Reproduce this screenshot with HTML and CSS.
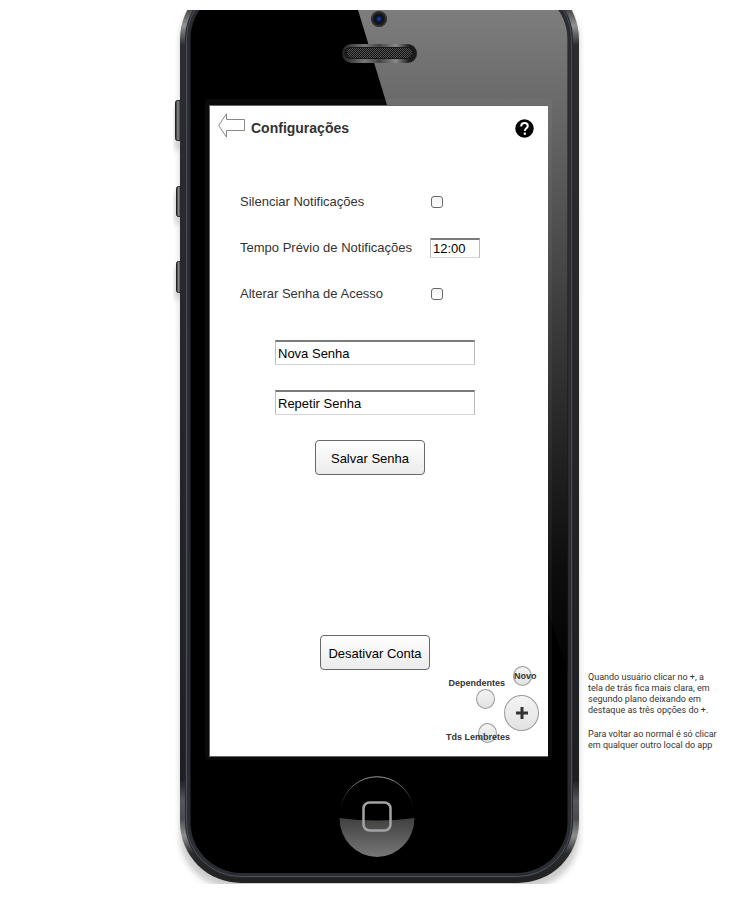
FILE: index.html
```html
<!DOCTYPE html>
<html lang="pt">
<head>
<meta charset="utf-8">
<meta name="viewport" content="width=device-width, initial-scale=1">
<title>Configurações</title>
<link rel="stylesheet" href="styles.css">
</head>
<body>
<main class="board">
  <section class="phone">
    <svg class="phone-art" viewBox="170 10 414 874" preserveAspectRatio="none" aria-hidden="true">
      <defs>
        <linearGradient id="metal" gradientUnits="userSpaceOnUse" x1="0" y1="10" x2="0" y2="884">
          <stop offset="0" stop-color="#4a4a4a"/>
          <stop offset=".018" stop-color="#929292"/>
          <stop offset=".04" stop-color="#2b2d2f"/>
          <stop offset=".88" stop-color="#1d1f21"/>
          <stop offset=".905" stop-color="#55575a"/>
          <stop offset=".925" stop-color="#4a4c4f"/>
          <stop offset=".945" stop-color="#8e8e8e"/>
          <stop offset=".965" stop-color="#2a2a2a"/>
          <stop offset="1" stop-color="#202020"/>
        </linearGradient>
        <linearGradient id="gloss" gradientUnits="userSpaceOnUse" x1="0" y1="10" x2="0" y2="690">
          <stop offset="0" stop-color="#7d7d7d"/>
          <stop offset=".14" stop-color="#696969"/>
          <stop offset=".45" stop-color="#3c3c3c"/>
          <stop offset=".82" stop-color="#0d0d0d"/>
          <stop offset="1" stop-color="#010101"/>
        </linearGradient>
        <linearGradient id="speaker" x1="0" y1="0" x2="1" y2="0">
          <stop offset="0" stop-color="#222"/>
          <stop offset=".3" stop-color="#777"/>
          <stop offset=".5" stop-color="#444"/>
          <stop offset=".72" stop-color="#8a8a8a"/>
          <stop offset=".9" stop-color="#1c1c1c"/>
        </linearGradient>
        <linearGradient id="home" x1="0" y1="0" x2="0" y2="1">
          <stop offset="0" stop-color="#404040"/>
          <stop offset="1" stop-color="#777"/>
        </linearGradient>
        <linearGradient id="arc" x1="0" y1="0" x2="0" y2="1">
          <stop offset="0" stop-color="#999"/>
          <stop offset=".7" stop-color="#222"/>
          <stop offset="1" stop-color="#000"/>
        </linearGradient>
        <linearGradient id="key" x1="0" y1="0" x2="1" y2="0">
          <stop offset="0" stop-color="#222"/>
          <stop offset=".35" stop-color="#8a8a8a"/>
          <stop offset=".7" stop-color="#333"/>
        </linearGradient>
        <radialGradient id="lens">
          <stop offset="0" stop-color="#1c4fae"/>
          <stop offset=".3" stop-color="#091c52"/>
          <stop offset=".55" stop-color="#111"/>
          <stop offset=".9" stop-color="#333"/>
          <stop offset="1" stop-color="#222"/>
        </radialGradient>
        <pattern id="mesh" width="2" height="2" patternUnits="userSpaceOnUse">
          <rect width="2" height="2" fill="#111"/>
          <rect width="1" height="1" fill="#555"/>
          <rect x="1" y="1" width="1" height="1" fill="#555"/>
        </pattern>
        <filter id="soft" x="-10%" y="-10%" width="120%" height="120%"><feGaussianBlur stdDeviation="3"/></filter>
        <clipPath id="face"><rect x="190.500" y="-12" width="377" height="885" rx="51"/></clipPath>
      </defs>
      <rect x="180" y="-10" width="399" height="898" rx="52" fill="#000" opacity=".2" filter="url(#soft)"/>
      <g opacity=".15" filter="url(#soft)">
        <rect x="174" y="106" width="8" height="44"/>
        <rect x="174" y="192" width="8" height="32"/>
        <rect x="174" y="267" width="8" height="32"/>
      </g>
      <g fill="url(#key)" stroke="#222">
        <rect x="175.500" y="100.500" width="7" height="40" rx="2"/>
        <rect x="176.500" y="186.500" width="6" height="30" rx="2"/>
        <rect x="176.500" y="261.500" width="6" height="31" rx="2"/>
      </g>
      <rect x="180" y="-22" width="399" height="905" rx="61" fill="url(#metal)"/>
      <rect x="185" y="-17" width="388" height="895" rx="56" fill="#26282b"/>
      <rect x="186.500" y="-15.500" width="385" height="892" rx="54" fill="#2a2c2f" stroke="#4a5160"/>
      <g clip-path="url(#face)">
        <rect x="190" y="10" width="378" height="864" fill="#000"/>
        <path d="M358 10H570V680L387 105Z" fill="url(#gloss)"/>
      </g>
      <rect x="205" y="99" width="347" height="661" rx="3" fill="#fff" opacity=".04"/>
      <rect x="209" y="105" width="339" height="652" fill="#666"/>
      <circle cx="379" cy="19" r="8" fill="url(#lens)"/>
      <rect x="342" y="44" width="75" height="19" rx="9.500" fill="url(#speaker)"/>
      <rect x="344" y="47" width="71" height="12" rx="6" fill="#1a1a1a"/>
      <rect x="347" y="48" width="65" height="10" rx="5" fill="url(#mesh)"/>
      <path d="M341 806A37 38 0 0 1 413 806" fill="none" stroke="url(#arc)"/>
      <path d="M339.500 818Q377 823 414.500 818A37.500 39 0 0 1 339.500 818Z" fill="url(#home)"/>
      <rect x="363.500" y="802.500" width="27" height="28" rx="6" fill="none" stroke="#a3a3a7" stroke-width="2.500"/>
    </svg>

    <div class="screen">
      <header class="top">
        <a class="back" href="#voltar" aria-label="Voltar">
          <svg width="27" height="25" viewBox="0 0 27 25" aria-hidden="true"><path d="M.7 12.500L8.500.8V6.500H26.500V17.500H8.500V24.200Z" fill="#fff" stroke="#888"/></svg>
        </a>
        <h1>Configurações</h1>
        <a class="help" href="#ajuda" aria-label="Ajuda">
          <svg width="19" height="19" viewBox="0 0 19 19" aria-hidden="true"><circle cx="9.500" cy="9.500" r="9.200"/><path d="M6.200 7.400C6.200 5.200 7.600 4.100 9.500 4.100S12.800 5.300 12.800 7.100C12.800 9.200 9.800 9.300 9.800 12" fill="none" stroke="#fff" stroke-width="2"/><rect x="8.700" y="13.600" width="2.200" height="2.200" fill="#fff"/></svg>
        </a>
      </header>

      <form class="settings">
        <label for="mute">Silenciar Notificações</label>
        <input id="mute" type="checkbox">
        <label for="lead">Tempo Prévio de Notificações</label>
        <input id="lead" class="field time" type="text" value="12:00">
        <label for="change">Alterar Senha de Acesso</label>
        <input id="change" type="checkbox">
      </form>

      <form class="password">
        <input class="field" type="text" value="Nova Senha" aria-label="Nova Senha">
        <input class="field" type="text" value="Repetir Senha" aria-label="Repetir Senha">
        <button class="btn" type="button">Salvar Senha</button>
      </form>

      <button class="btn deactivate" type="button">Desativar Conta</button>

      <nav class="fab">
        <button class="dot novo" type="button"><span>Novo</span></button>
        <button class="dot dependentes" type="button"><span>Dependentes</span></button>
        <button class="dot lembretes" type="button"><span>Tds Lembretes</span></button>
        <button class="dot plus" type="button" aria-label="Mais opções">
          <svg width="12" height="12" viewBox="0 0 12 12" aria-hidden="true"><path d="M6 0V12M0 6H12" stroke="#333" stroke-width="3"/></svg>
        </button>
      </nav>
    </div>
  </section>

  <aside class="note">
    <p>Quando usuário clicar no +, a<br>tela de trás fica mais clara, em<br>segundo plano deixando em<br>destaque as três opções do +.</p>
    <p>Para voltar ao normal é só clicar<br>em qualquer outro local do app</p>
  </aside>
</main>
</body>
</html>
```
FILE: styles.css
```css
* {
  box-sizing: border-box;
}

body {
  margin: 0;
  background: #fff;
  color: #333;
  font: 13px/16px "Liberation Sans", Arial, sans-serif;
}

.board {
  display: grid;
  grid-template-columns: minmax(0, 170px) 414px minmax(0, 1fr);
  padding: 10px 0;
}

.phone {
  grid-column: 2;
  position: relative;
  padding: 96px 36px 128px 40px;
}

.phone-art {
  position: absolute;
  inset: 0;
  width: 100%;
  height: 100%;
}

.screen {
  position: relative;
  padding: 7px 0 86px;
  background: #fff;
}

.top {
  display: flex;
  align-items: flex-end;
  padding: 0 14px 0 8px;
}

.top a,
.top svg {
  display: block;
}

h1 {
  margin: 0 auto 0 6px;
  font-size: 14px;
  line-height: 20px;
}

.settings {
  display: grid;
  grid-template-columns: 190px 1fr;
  grid-auto-rows: 24px;
  row-gap: 22px;
  align-items: center;
  margin-top: 52px;
  padding-left: 30px;
}

input[type="checkbox"] {
  appearance: none;
  width: 12px;
  height: 12px;
  margin: 0 1px;
  border: 1px solid #686868;
  border-radius: 3px;
  background: linear-gradient(#f2f2f2, #fff);
}

input[type="checkbox"]:checked {
  background: #686868;
}

.field {
  width: 100%;
  height: 25px;
  padding: 0 2px;
  border: 1px solid #bbb;
  border-top: 2px solid #7a7a7a;
  border-bottom-color: #d5d5d5;
  background: #fff;
  color: #000;
  font: inherit;
}

.time {
  width: 50px;
  height: 20px;
}

.password {
  display: flex;
  flex-direction: column;
  gap: 25px;
  width: 200px;
  margin: 34px 0 0 65px;
}

.btn {
  display: block;
  width: 110px;
  height: 35px;
  margin-left: 40px;
  padding: 2px 0 0;
  border: 1px solid #686868;
  border-radius: 4px;
  background: linear-gradient(#fff, #ebebeb);
  color: #000;
  font: inherit;
}

.deactivate {
  margin: 160px 0 0 110px;
}

.fab {
  position: absolute;
  right: 0;
  bottom: 0;
  width: 110px;
  height: 100px;
}

.dot {
  position: absolute;
  display: flex;
  align-items: center;
  justify-content: center;
  width: 19px;
  height: 20px;
  padding: 0;
  border: 1px solid #999;
  border-radius: 50%;
  background: linear-gradient(#f4f4f4, #e2e2e2);
  color: #333;
  font: bold 9px/10px "Liberation Sans", Arial, sans-serif;
}

.dot span {
  position: absolute;
  white-space: nowrap;
}

.novo {
  top: 10px;
  right: 16px;
}

.novo span {
  left: 0;
}

.dependentes {
  top: 33px;
  right: 53px;
}

.dependentes span {
  right: -11px;
  bottom: 20px;
}

.lembretes {
  top: 67px;
  right: 51px;
}

.lembretes span {
  right: -14px;
  bottom: 0;
}

.plus {
  top: 39px;
  right: 9px;
  width: 35px;
  height: 36px;
}

.note {
  padding: 662px 0 0 4px;
  font: 9px/11px Roboto, "Liberation Sans", sans-serif;
  white-space: nowrap;
}

.note p {
  margin: 0 0 13px;
}
```
